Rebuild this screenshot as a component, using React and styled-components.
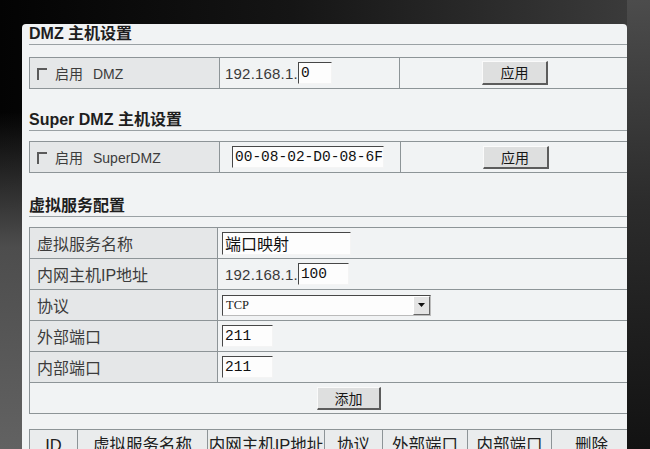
import styled, { createGlobalStyle } from 'styled-components'

const GlobalStyle = createGlobalStyle`
  html, body {
    margin: 0;
    padding: 0;
    background: #050505;
    overflow: hidden;
  }
  * {
    box-sizing: border-box;
  }
`

const Frame = styled.div`
  width: 650px;
  height: 449px;
  padding: 24px 23px 0 22px;
  background:
    linear-gradient(to bottom, rgba(0, 0, 0, 0) 25%, #4d4d4d 55%, #626262 100%) left top / 22px 100% no-repeat,
    linear-gradient(to bottom, #4c4c4c 0%, #2c2c2c 45%, #121212 100%) right top / 23px 100% no-repeat,
    linear-gradient(to right, #030303 0%, #151515 45%, #3d3d3d 100%);
`

const Panel = styled.div`
  height: 425px;
  background: #f1f3f4;
  border-radius: 4px 4px 0 0;
  overflow: hidden;
  padding-left: 7px;
  font-family: "Liberation Sans", "Noto Sans CJK SC", sans-serif;
  color: #3c3c3c;
`

const SectionTitle = styled.div`
  margin-top: ${p => p.$gap || 0}px;
  height: 21px;
  line-height: 20px;
  font-size: 16px;
  font-weight: bold;
  color: #1e1e1e;
  border-bottom: 1px solid #9aa1a4;
  white-space: nowrap;
`

const Table = styled.table`
  margin-top: ${p => p.$gap || 0}px;
  width: 602px;
  border-collapse: collapse;
  table-layout: fixed;
`

const Cell = styled.td`
  height: 31px;
  padding: 0 0 0 ${p => p.$pad ?? 5}px;
  border: 1px solid #8d9497;
  background: ${p => (p.$shade ? '#e5e7e8' : '#f1f3f4')};
  text-align: ${p => p.$align || 'left'};
  vertical-align: middle;
  white-space: nowrap;
  font-size: ${p => p.$size || 14}px;
`

const HeadCell = styled.th`
  height: 31px;
  padding: 4px 0 0;
  border: 1px solid #8d9497;
  background: #eaeced;
  font-size: 16.5px;
  line-height: 22px;
  font-weight: normal;
  color: #202020;
  text-align: center;
  vertical-align: top;
  white-space: nowrap;
  overflow: hidden;
`

const Check = styled.span`
  display: inline-block;
  width: 10px;
  height: 12px;
  margin-right: 8px;
  vertical-align: -1px;
  border-top: 2px solid #5a5a5a;
  border-left: 2px solid #5a5a5a;
`

const Spaced = styled.span`
  margin-left: 10px;
`

const IpPrefix = styled.span`
  font-size: 15px;
  letter-spacing: 0.2px;
  color: #3a3a3a;
  vertical-align: middle;
`

const Field = styled.span`
  display: inline-block;
  width: ${p => p.$w}px;
  height: ${p => p.$h || 22}px;
  padding-left: 2px;
  vertical-align: middle;
  background: #fdfdfd;
  border-top: 1px solid #474747;
  border-left: 1px solid #474747;
  border-right: 1px solid #f4f4f4;
  border-bottom: 1px solid #f4f4f4;
  font-family: ${p => (p.$cjk ? '"Noto Sans CJK SC", sans-serif' : '"Liberation Mono", monospace')};
  font-size: ${p => (p.$cjk ? 16 : 14.5)}px;
  line-height: ${p => (p.$h || 22) - 2}px;
  color: #111;
`

const Select = styled.span`
  display: inline-flex;
  align-items: center;
  justify-content: space-between;
  width: 209px;
  height: 21px;
  vertical-align: middle;
  background: #fdfdfd;
  border-top: 1px solid #474747;
  border-left: 1px solid #474747;
  border-right: 1px solid #bbb;
  border-bottom: 1px solid #bbb;
  padding-left: 3px;
  font-family: "Liberation Serif", serif;
  font-size: 12.5px;
  color: #222;
`

const ArrowBox = styled.span`
  display: flex;
  align-items: center;
  justify-content: center;
  width: 17px;
  height: 19px;
  background: #e4e4e4;
  border-top: 1px solid #fff;
  border-left: 1px solid #fff;
  border-right: 1px solid #666;
  border-bottom: 1px solid #666;
`

const Button = styled.span`
  display: inline-block;
  width: ${p => p.$w}px;
  height: ${p => p.$h}px;
  line-height: ${p => p.$h - 3}px;
  text-align: center;
  vertical-align: middle;
  background: #dedfdf;
  border-top: 1px solid #fafafa;
  border-left: 1px solid #fafafa;
  border-right: 2px solid #5c5c5c;
  border-bottom: 2px solid #5c5c5c;
  font-family: "Noto Sans CJK SC", sans-serif;
  font-size: 14px;
  color: #161616;
`

const rows = [
  { label: '虚拟服务名称', input: <Field $w={129} $h={23} $cjk>端口映射</Field> },
  {
    label: '内网主机IP地址',
    pad: 7,
    input: (
      <>
        <IpPrefix>192.168.1.</IpPrefix>
        <Field $w={51}>100</Field>
      </>
    ),
  },
  {
    label: '协议',
    input: (
      <Select>
        TCP
        <ArrowBox>
          <svg width="7" height="4" viewBox="0 0 7 4">
            <path d="M0 0h7L3.5 4z" fill="#111" />
          </svg>
        </ArrowBox>
      </Select>
    ),
  },
  { label: '外部端口', input: <Field $w={51}>211</Field> },
  { label: '内部端口', input: <Field $w={51}>211</Field> },
]

const listHead = [
  ['ID', 48],
  ['虚拟服务名称', 130],
  ['内网主机IP地址', 117],
  ['协议', 58],
  ['外部端口', 85],
  ['内部端口', 84],
  ['删除', 80],
]

const App = () => (
  <>
    <GlobalStyle />
    <Frame>
      <Panel>
        <SectionTitle>DMZ 主机设置</SectionTitle>
        <Table $gap={12}>
          <colgroup>
            <col style={{ width: 190 }} />
            <col style={{ width: 180 }} />
            <col />
          </colgroup>
          <tbody>
            <tr>
              <Cell $shade $pad={7}>
                <Check />启用<Spaced>DMZ</Spaced>
              </Cell>
              <Cell>
                <IpPrefix>192.168.1.</IpPrefix>
                <Field $w={34}>0</Field>
              </Cell>
              <Cell $align="center" $pad={0}>
                <Button $w={66} $h={24}>应用</Button>
              </Cell>
            </tr>
          </tbody>
        </Table>

        <SectionTitle $gap={21}>Super DMZ 主机设置</SectionTitle>
        <Table $gap={10}>
          <colgroup>
            <col style={{ width: 190 }} />
            <col style={{ width: 181 }} />
            <col />
          </colgroup>
          <tbody>
            <tr>
              <Cell $shade $pad={7}>
                <Check />启用<Spaced>SuperDMZ</Spaced>
              </Cell>
              <Cell $pad={12}>
                <Field $w={152}>00-08-02-D0-08-6F</Field>
              </Cell>
              <Cell $align="center" $pad={0}>
                <Button $w={66} $h={23}>应用</Button>
              </Cell>
            </tr>
          </tbody>
        </Table>

        <SectionTitle $gap={23}>虚拟服务配置</SectionTitle>
        <Table $gap={10}>
          <colgroup>
            <col style={{ width: 188 }} />
            <col />
          </colgroup>
          <tbody>
            {rows.map(r => (
              <tr key={r.label}>
                <Cell $shade $pad={7} $size={16}>{r.label}</Cell>
                <Cell $pad={r.pad ?? 4}>{r.input}</Cell>
              </tr>
            ))}
            <tr>
              <Cell colSpan={2} $pad={287}>
                <Button $w={64} $h={23}>添加</Button>
              </Cell>
            </tr>
          </tbody>
        </Table>

        <Table $gap={15}>
          <colgroup>
            {listHead.map(([t, w]) => (
              <col key={t} style={{ width: w }} />
            ))}
          </colgroup>
          <thead>
            <tr>
              {listHead.map(([t]) => (
                <HeadCell key={t}>{t}</HeadCell>
              ))}
            </tr>
          </thead>
        </Table>
      </Panel>
    </Frame>
  </>
)

export default App
